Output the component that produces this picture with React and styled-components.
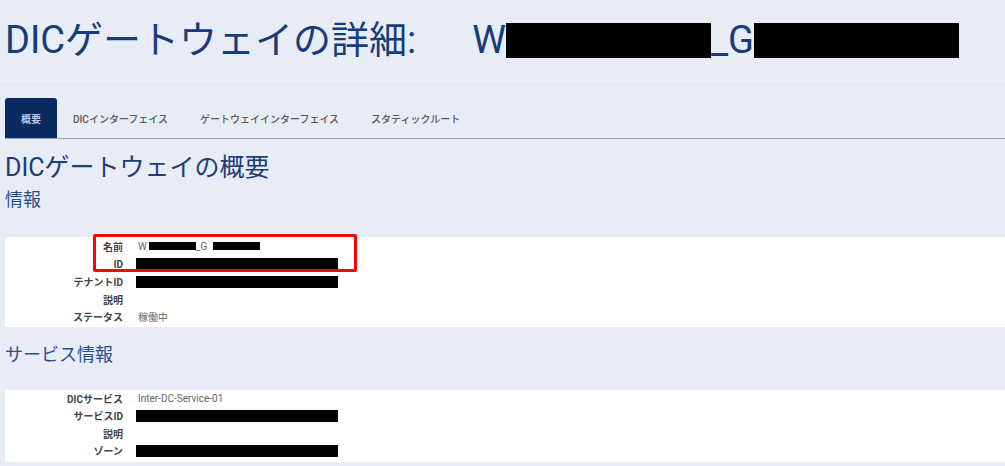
import React from "react";
import styled, { createGlobalStyle } from "styled-components";

const GlobalStyle = createGlobalStyle`
  html, body {
    margin: 0;
    padding: 0;
    background: #e8ecf4;
    font-family: Roboto, "Noto Sans CJK JP", sans-serif;
  }
`;

const tabs = ["概要", "DICインターフェイス", "ゲートウェイインターフェイス", "スタティックルート"];

const info = [
  { label: "名前", value: "name" },
  { label: "ID", value: "redact" },
  { label: "テナントID", value: "redact" },
  { label: "説明", value: "" },
  { label: "ステータス", value: "稼働中" },
];

const service = [
  { label: "DICサービス", value: "Inter-DC-Service-01" },
  { label: "サービスID", value: "redact" },
  { label: "説明", value: "" },
  { label: "ゾーン", value: "redact" },
];

const App = () => {
  const renderValue = (value) => {
    if (value === "redact") return <Redact />;
    if (value === "name")
      return (
        <>
          W<SmallRedact />_G<SmallRedact $gap />
        </>
      );
    return value;
  };

  return (
    <Page>
      <GlobalStyle />
      <TitleBar>
        <Title>
          DICゲートウェイの詳細:
          <GatewayName>
            W<TitleRedact />_G<TitleRedact />
          </GatewayName>
        </Title>
      </TitleBar>
      <TabBar>
        {tabs.map((t, i) => (
          <Tab key={t} $active={i === 0}>
            {t}
          </Tab>
        ))}
      </TabBar>
      <Heading>DICゲートウェイの概要</Heading>
      <SubHeading>情報</SubHeading>
      <Panel $top={26}>
        <Highlight />
        {info.map((row) => (
          <Row key={row.label}>
            <Label>{row.label}</Label>
            <Value>{renderValue(row.value)}</Value>
          </Row>
        ))}
      </Panel>
      <SubHeading $top={17}>サービス情報</SubHeading>
      <Panel $top={24} $last>
        {service.map((row) => (
          <Row key={row.label}>
            <Label>{row.label}</Label>
            <Value>{renderValue(row.value)}</Value>
          </Row>
        ))}
      </Panel>
    </Page>
  );
};

const Page = styled.div`
  padding-left: 5px;
  overflow: hidden;
  height: 466px;
`;
const TitleBar = styled.div`
  margin-left: -5px;
  padding: 17px 0 17px 5px;
  border-bottom: 1px solid #eff2f8;
`;
const Title = styled.h1`
  margin: 0;
  font-size: 38px;
  font-weight: 400;
  line-height: 46px;
  color: #173c7a;
  white-space: nowrap;
`;
const GatewayName = styled.span`
  margin-left: 56px;
`;
const TitleRedact = styled.span`
  display: inline-block;
  width: 205px;
  height: 35px;
  background: #000;
  vertical-align: -5px;
`;
const TabBar = styled.div`
  display: flex;
  margin-top: 17px;
  border-bottom: 1px solid #8ea8d6;
`;
const Tab = styled.div`
  height: 40px;
  padding: 0 16px;
  display: flex;
  align-items: center;
  font-size: 10px;
  font-weight: 500;
  color: ${(p) => (p.$active ? "#d7dced" : "#5a5a5a")};
  background: ${(p) => (p.$active ? "#0b2a5f" : "transparent")};
  border-radius: 3px 3px 0 0;
`;
const Heading = styled.h2`
  margin: 13px 0 0;
  font-size: 25px;
  font-weight: 400;
  line-height: 32px;
  color: #1b3d78;
`;
const SubHeading = styled.h3`
  margin: ${(p) => p.$top || 5}px 0 0;
  font-size: 18px;
  font-weight: 400;
  line-height: 22px;
  color: #2a4f8c;
`;
const Panel = styled.div`
  position: relative;
  margin-top: ${(p) => p.$top}px;
  background: #fff;
  padding: ${(p) => (p.$last ? "0 0 2px" : "1px 0")};
`;
const Highlight = styled.div`
  position: absolute;
  left: 88px;
  top: -3px;
  width: 258px;
  height: 32px;
  border: 3px solid #ff0000;
  border-radius: 2px;
`;
const Row = styled.div`
  display: grid;
  grid-template-columns: 118px 1fr;
  column-gap: 15px;
  height: 17.5px;
  align-items: center;
  font-size: 10px;
`;
const Label = styled.div`
  text-align: right;
  font-weight: 700;
  color: #444;
`;
const Value = styled.div`
  color: #666;
  white-space: nowrap;
`;
const Redact = styled.span`
  display: inline-block;
  width: 202px;
  height: 12px;
  margin-left: -2px;
  background: #000;
  vertical-align: middle;
`;
const SmallRedact = styled.span`
  display: inline-block;
  width: 47px;
  height: 8px;
  margin-left: ${(p) => (p.$gap ? "6px" : "2px")};
  background: #000;
  vertical-align: 0;
`;

export default App;
